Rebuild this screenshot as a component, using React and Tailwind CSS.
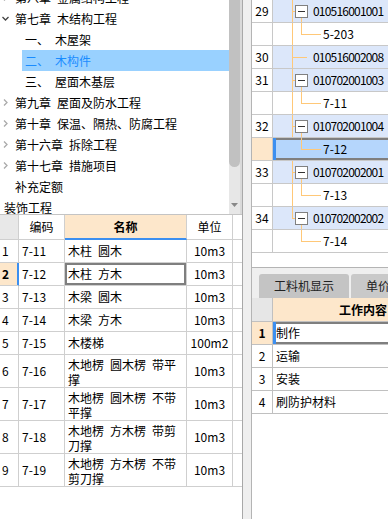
import React from 'react';

const SP = '\u2002';

function Chevron({ open }) {
    return open ? (
        <svg width="9" height="9" viewBox="0 0 9 9" className="shrink-0">
            <path d="M1.5 3 L4.5 6 L7.5 3" fill="none" stroke="#444" strokeWidth="1.3" />
        </svg>
    ) : (
        <svg width="9" height="9" viewBox="0 0 9 9" className="shrink-0">
            <path d="M3 1.5 L6 4.5 L3 7.5" fill="none" stroke="#aaa" strokeWidth="1.3" />
        </svg>
    );
}

const tree = [
    { lv: 1, t: `第八章${SP}金属结构工程` },
    { lv: 1, t: `第七章${SP}木结构工程`, open: true },
    { lv: 2, t: `一、${SP}木屋架` },
    { lv: 2, t: `二、${SP}木构件`, sel: true },
    { lv: 2, t: `三、${SP}屋面木基层` },
    { lv: 1, t: `第九章${SP}屋面及防水工程` },
    { lv: 1, t: `第十章${SP}保温、隔热、防腐工程` },
    { lv: 1, t: `第十六章${SP}拆除工程` },
    { lv: 1, t: `第十七章${SP}措施项目` },
    { lv: 1, t: '补充定额', leaf: true },
    { lv: 0, t: '装饰工程' },
];

const quotas = [
    ['1', '7-11', [`木柱${SP}圆木`], '10m3'],
    ['2', '7-12', [`木柱${SP}方木`], '10m3', true],
    ['3', '7-13', [`木梁${SP}圆木`], '10m3'],
    ['4', '7-14', [`木梁${SP}方木`], '10m3'],
    ['5', '7-15', ['木楼梯'], '100m2'],
    ['6', '7-16', [`木地楞${SP}圆木楞${SP}带平`, '撑'], '10m3'],
    ['7', '7-17', [`木地楞${SP}圆木楞${SP}不带`, '平撑'], '10m3'],
    ['8', '7-18', [`木地楞${SP}方木楞${SP}带剪`, '刀撑'], '10m3'],
    ['9', '7-19', [`木地楞${SP}方木楞${SP}不带`, '剪刀撑'], '10m3'],
];

const billRows = [
    { n: '29', t: '010516001001', box: true },
    { t: '5-203', sub: true },
    { n: '30', t: '010516002008' },
    { n: '31', t: '010702001003', box: true },
    { t: '7-11', sub: true },
    { n: '32', t: '010702001004', box: true },
    { t: '7-12', sub: true, sel: true },
    { n: '33', t: '010702002001', box: true },
    { t: '7-13', sub: true },
    { n: '34', t: '010702002002', box: true, last: true },
    { t: '7-14', sub: true, last: true },
];

const work = ['制作', '运输', '安装', '刷防护材料'];

const ORANGE = 'bg-[#ffc878]';

function TreePanel() {
    return (
        <div className="h-[215px] shrink-0 flex border-b border-[#c4c4c4] overflow-hidden">
            <div className="w-[229px] overflow-hidden">
                <div className="-mt-[13px]">
                    {tree.map((r, i) => (
                        <div key={i} className="h-[21px] flex items-center whitespace-nowrap">
                            {r.lv === 0 && <span className="pl-[4px]">{r.t}</span>}
                            {r.lv === 1 && (
                                <>
                                    <span className="w-[15px] pl-[1px] flex">{!r.leaf && <Chevron open={r.open} />}</span>
                                    <span>{r.t}</span>
                                </>
                            )}
                            {r.lv === 2 && (
                                <div className="pl-[22px] w-full h-full">
                                    <div className={`h-full flex items-center pl-[3px] ${r.sel ? 'bg-[#99d1ff] text-[#1a8cff]' : ''}`}>
                                        {r.t}
                                    </div>
                                </div>
                            )}
                        </div>
                    ))}
                </div>
            </div>
            <div className="w-[13px] bg-[#e7e7e7] border-r-[2px] border-[#d9d9d9] flex flex-col">
                <div className="h-[167px] w-[11px] bg-[#c1c1c1] rounded-b-[6px]" />
                <div className="flex-1 flex items-end justify-center pb-[7px]">
                    <svg width="7" height="4" viewBox="0 0 7 4">
                        <path d="M0 0 L7 0 L3.5 4 Z" fill="#888" />
                    </svg>
                </div>
            </div>
        </div>
    );
}

function QuotaTable() {
    const cell = 'border-r border-b border-[#cfcfcf] flex items-center';
    return (
        <div className="flex-1">
            <div className="flex h-[25px]">
                <div className={`${cell} w-[19px] bg-[#e8e8e8]`} />
                <div className={`${cell} w-[46px] justify-center`}>编码</div>
                <div className="w-[122px] border-r border-[#cfcfcf] border-b-[2px] border-b-[#3c8ff0] bg-[#fde7cb] flex items-center justify-center font-bold">名称</div>
                <div className={`${cell} w-[46px] justify-center`}>单位</div>
                <div className="w-[9px] border-b border-[#cfcfcf]" />
            </div>
            {quotas.map(([n, code, name, unit, sel]) => {
                const h = name.length > 1 ? 'h-[33px]' : 'h-[23px]';
                return (
                    <div key={n} className={`flex ${h}`}>
                        <div className={`${cell} w-[19px] pl-[2px] ${sel ? 'bg-[#fde7cb] font-bold border-r-[#3c8ff0] shadow-[inset_-1px_0_0_#3c8ff0]' : ''}`}>{n}</div>
                        <div className={`${cell} w-[46px] pl-[3px]`}>{code}</div>
                        <div className={`${cell} w-[122px] pl-[3px] whitespace-nowrap ${sel ? 'shadow-[inset_0_0_0_2px_#7f7f7f]' : ''} ${name.length > 1 ? 'items-start pt-[2px] leading-[15px]' : ''}`}>
                            <div>
                                {name.map((l, i) => (
                                    <div key={i}>{l}</div>
                                ))}
                            </div>
                        </div>
                        <div className={`${cell} w-[46px] justify-center`}>{unit}</div>
                        <div className="w-[9px] border-b border-[#cfcfcf]" />
                    </div>
                );
            })}
        </div>
    );
}

function BillGrid() {
    return (
        <div className="h-[268px] shrink-0 border-b border-[#b4b4b4]">
            {billRows.map((r, i) => (
                <div key={i} className="flex h-[23px] border-b border-[#c8c8c8]">
                    <div className={`w-[21px] shrink-0 border-r border-[#c8c8c8] flex items-center justify-center ${r.sel ? 'bg-[#fde7cb]' : ''}`}>
                        {r.n}
                    </div>
                    <div
                        className={`relative flex-1 flex items-center whitespace-nowrap ${
                            r.sub ? 'pl-[50px]' : 'pl-[40px] bg-[#dce7fa] tracking-[-0.8px]'
                        } ${r.sel ? 'bg-[#b5d6fc] shadow-[inset_3px_0_0_#3c8ff0,inset_0_2px_0_#7f7f7f,inset_0_-2px_0_#7f7f7f]' : ''}`}
                    >
                        {!(r.sub && r.last) && !r.sel && (
                            <span className={`absolute left-[19px] top-0 w-px ${ORANGE} ${r.last ? 'h-[12px]' : 'h-full'}`} />
                        )}
                        {!r.sub && r.box && (
                            <>
                                <span className={`absolute left-[19px] top-[11px] w-[3px] h-px ${ORANGE}`} />
                                <span className={`absolute left-[28px] top-[18px] bottom-0 w-px ${ORANGE}`} />
                                <span className="absolute left-[22px] top-[5px] w-[13px] h-[13px] border border-[#808080] bg-white flex items-center justify-center">
                                    <span className="w-[7px] h-px bg-[#333]" />
                                </span>
                            </>
                        )}
                        {!r.sub && !r.box && <span className={`absolute left-[19px] top-[11px] w-[15px] h-px ${ORANGE}`} />}
                        {r.sub && (
                            <>
                                <span className={`absolute left-[28px] top-0 w-px h-[12px] ${ORANGE}`} />
                                <span className={`absolute left-[28px] top-[11px] w-[20px] h-px ${ORANGE}`} />
                            </>
                        )}
                        <span className="relative">{r.t}</span>
                    </div>
                </div>
            ))}
        </div>
    );
}

function WorkPanel() {
    return (
        <div className="flex-1">
            <div className="h-[30px] bg-[#efefef] flex items-end gap-[2px] pl-[7px]">
                <div className="h-[24px] px-[15px] bg-[#c4c4c4] rounded-t-[3px] flex items-center whitespace-nowrap text-[#222]">工料机显示</div>
                <div className="h-[24px] px-[15px] bg-[#c9c9c9] rounded-t-[3px] flex items-center whitespace-nowrap text-[#222]">单价构成</div>
            </div>
            <div className="flex h-[24px] border-b border-[#c0c0c0]">
                <div className="w-[21px] shrink-0 bg-[#e6e6e6] border-r border-[#c0c0c0]" />
                <div className="w-[180px] shrink-0 bg-[#fde7cb] flex items-center justify-center font-bold">工作内容</div>
            </div>
            {work.map((w, i) => (
                <div key={i} className="flex h-[23px] border-b border-[#c0c0c0]">
                    <div className={`w-[21px] shrink-0 border-r border-[#c0c0c0] flex items-center justify-center ${i === 0 ? 'bg-[#fde7cb] font-bold' : ''}`}>
                        {i + 1}
                    </div>
                    <div className={`flex-1 flex items-center pl-[3px] whitespace-nowrap ${i === 0 ? 'shadow-[inset_3px_0_0_#3c8ff0,inset_0_2px_0_#7f7f7f,inset_0_-2px_0_#7f7f7f]' : ''}`}>
                        {w}
                    </div>
                </div>
            ))}
        </div>
    );
}

export default function App() {
    return (
        <div className="font-['Noto_Sans_CJK_SC',sans-serif] text-[12px] leading-none text-black w-[388px] h-[519px] flex overflow-hidden bg-white">
            <div className="w-[243px] shrink-0 border-r border-[#a8a8a8] flex flex-col">
                <TreePanel />
                <QuotaTable />
            </div>
            <div className="w-[8px] shrink-0 bg-[#efefef]" />
            <div className="flex-1 min-w-0 border-l border-[#b4b4b4] flex flex-col overflow-hidden">
                <BillGrid />
                <WorkPanel />
            </div>
        </div>
    );
}
